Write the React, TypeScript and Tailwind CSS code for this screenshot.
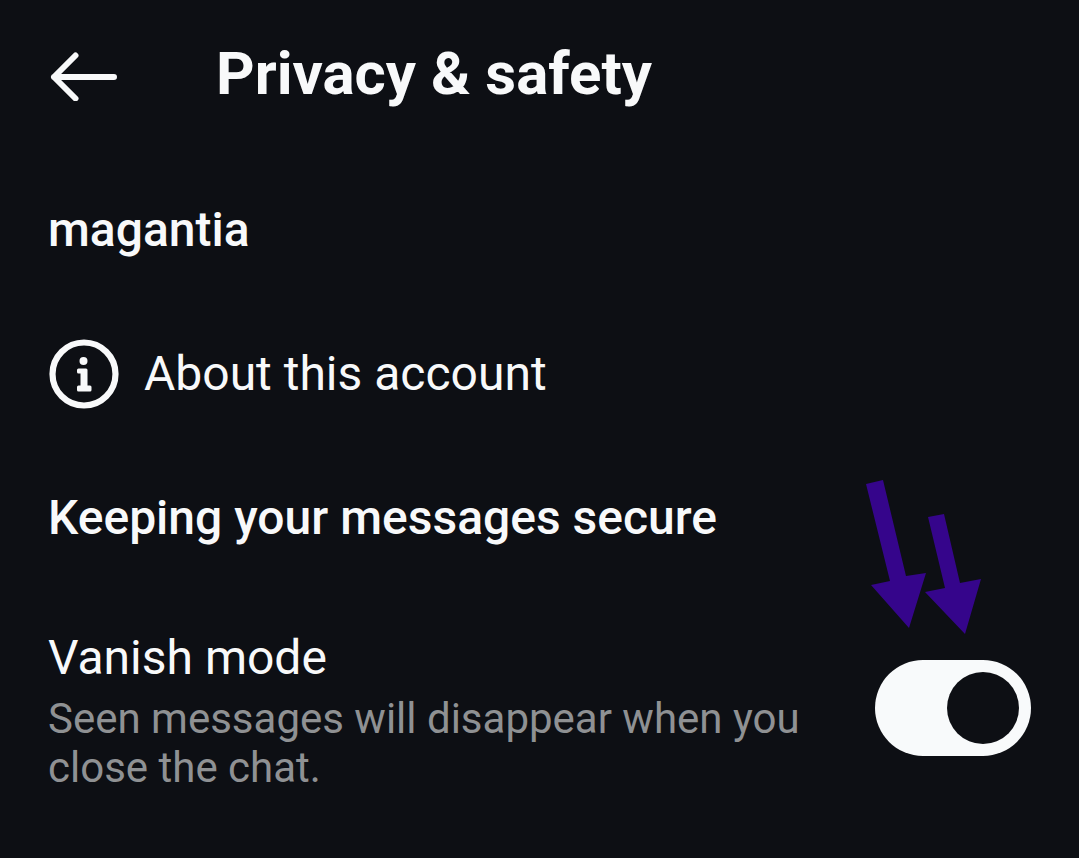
import { useState } from "react";

function BackArrow() {
  return (
    <svg viewBox="0 0 72 54" className="h-[54px] w-[72px]" fill="none" stroke="currentColor" strokeWidth="6" strokeLinecap="round" strokeLinejoin="round" aria-hidden="true">
      <path d="M27.500 8.500 6 30l21.500 21.500M6 30h60" />
    </svg>
  );
}

function InfoIcon() {
  return (
    <svg viewBox="0 0 72 72" className="size-[72px] shrink-0" aria-hidden="true">
      <circle cx="36" cy="36" r="31.500" fill="none" stroke="currentColor" strokeWidth="6.200" />
      <circle cx="35.500" cy="23" r="4" fill="currentColor" />
      <path
        d="M30.500 32h7.500v17h4v3H30.500v-3h3.500V34h-3.500z"
        fill="currentColor"
        stroke="currentColor"
        strokeWidth="3"
        strokeLinejoin="round"
      />
    </svg>
  );
}

function Pointers() {
  return (
    <svg viewBox="0 0 116 156" className="pointer-events-none absolute right-[50px] bottom-full mb-[26px] h-[156px] w-[116px] fill-[#35058b]" aria-hidden="true">
      <path d="M1 6 18 2 41 98 61 95 44 150 6 107 25 103z" />
      <path d="M63 39 79 36 95 105 116 101 100 156 60 114 80 110z" />
    </svg>
  );
}

export default function App() {
  const [vanish, setVanish] = useState(true);

  return (
    <main className="min-h-screen bg-[#0d0f14] px-12 pb-16 font-['Roboto',sans-serif] text-[#f8f9fa]">
      <header className="flex h-[148px] items-center gap-24">
        <button type="button" aria-label="Back">
          <BackArrow />
        </button>
        <h1 className="text-[60px] leading-[72px] font-bold">Privacy &amp; safety</h1>
      </header>

      <section>
        <h2 className="pt-[52px] text-[48px] leading-[60px] font-medium">magantia</h2>
        <a href="#about" className="mt-[78px] flex items-center gap-6 text-[48px] leading-[60px]">
          <InfoIcon />
          About this account
        </a>
      </section>

      <section className="pt-[78px]">
        <h2 className="text-[48px] leading-[60px] font-medium">Keeping your messages secure</h2>
        <div className="mt-20 flex items-start justify-between">
          <label htmlFor="vanish" className="max-w-[780px]">
            <span className="block text-[48px] leading-[60px]">Vanish mode</span>
            <span className="mt-1.5 block text-[42px] leading-[49px] text-[#8f9193]">
              Seen messages will disappear when you close the chat.
            </span>
          </label>
          <span className="relative mt-8 flex h-24 w-[156px] shrink-0">
            <input
              id="vanish"
              type="checkbox"
              role="switch"
              checked={vanish}
              onChange={(e) => setVanish(e.target.checked)}
              className="peer h-24 w-[156px] appearance-none rounded-full bg-[#5b5e62] checked:bg-[#f8fafb]"
            />
            <span className="pointer-events-none absolute top-3 left-3 size-[72px] rounded-full bg-[#0d0f14] peer-checked:left-[72px]" />
            <Pointers />
          </span>
        </div>
      </section>
    </main>
  );
}
